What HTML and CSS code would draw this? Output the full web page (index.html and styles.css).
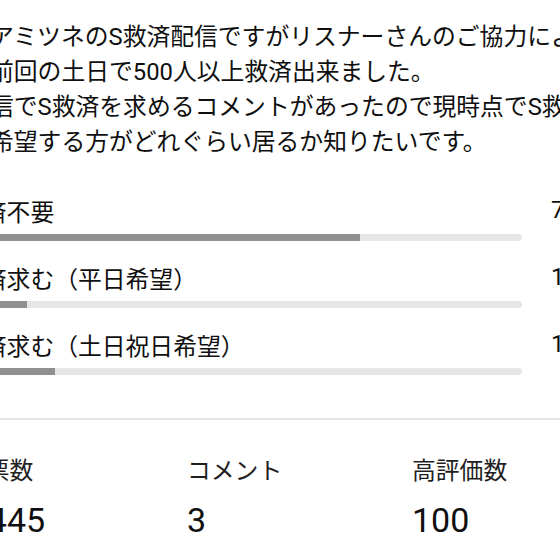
FILE: index.html
```html
<!DOCTYPE html>
<html lang="ja">
<head>
<meta charset="utf-8">
<link rel="stylesheet" href="styles.css">
</head>
<body>
<div class="page">
  <p class="post-text">アミツネのS救済配信ですがリスナーさんのご協力により<br>前回の土日で500人以上救済出来ました。<br>信でS救済を求めるコメントがあったので現時点でS救済を<br>希望する方がどれぐらい居るか知りたいです。</p>
  <div class="poll">
    <div class="option">
      <div class="label">救済不要</div>
      <div class="pct">71%</div>
      <div class="track"><div class="fill" style="width:71.2%"></div></div>
    </div>
    <div class="option">
      <div class="label">救済求む（平日希望）</div>
      <div class="pct">12%</div>
      <div class="track"><div class="fill" style="width:12%"></div></div>
    </div>
    <div class="option">
      <div class="label">救済求む（土日祝日希望）</div>
      <div class="pct">17%</div>
      <div class="track"><div class="fill" style="width:17%"></div></div>
    </div>
  </div>
  <div class="divider"></div>
  <div class="stats">
    <div class="stat"><div class="stat-label">投票数</div><div class="stat-value">1,445</div></div>
    <div class="stat"><div class="stat-label">コメント</div><div class="stat-value">3</div></div>
    <div class="stat"><div class="stat-label">高評価数</div><div class="stat-value">100</div></div>
  </div>
</div>
</body>
</html>
```
FILE: styles.css
```css
html, body {
  margin: 0;
  padding: 0;
  background: #ffffff;
  overflow: hidden;
}
body {
  width: 560px;
  height: 560px;
  font-family: Roboto, "Noto Sans CJK JP", sans-serif;
  color: #0f0f0f;
}
.page {
  margin-left: -41px;
  width: 720px;
}
.post-text {
  margin: 0;
  padding: 20px 0 0 31px;
  font-size: 23.8px;
  line-height: 35px;
  white-space: nowrap;
}
.poll {
  margin-top: 38px;
  display: flex;
  flex-direction: column;
}
.option {
  display: grid;
  grid-template-columns: 563px 1fr;
  grid-template-rows: auto auto;
  align-content: start;
  column-gap: 29px;
  height: 67px;
}
.label {
  font-size: 23.8px;
  line-height: 30px;
  margin-bottom: 6px;
  white-space: nowrap;
}
.pct {
  font-size: 23.8px;
  line-height: 30px;
  margin-top: -3px;
}
.track {
  grid-column: 1;
  height: 7px;
  border-radius: 4px;
  background: #e6e6e6;
  overflow: hidden;
}
.fill {
  height: 100%;
  background: #909090;
  border-radius: 4px 0 0 4px;
}
.divider {
  margin-top: 19px;
  height: 2px;
  background: #e5e5e5;
}
.stats {
  display: grid;
  grid-template-columns: 225px 225px 225px;
  padding: 36px 0 0 3px;
}
.stat-label {
  font-size: 23.8px;
  line-height: 30px;
  color: #1f1f1f;
}
.stat-value {
  margin-top: 12px;
  font-size: 34px;
  line-height: 44px;
}
```
